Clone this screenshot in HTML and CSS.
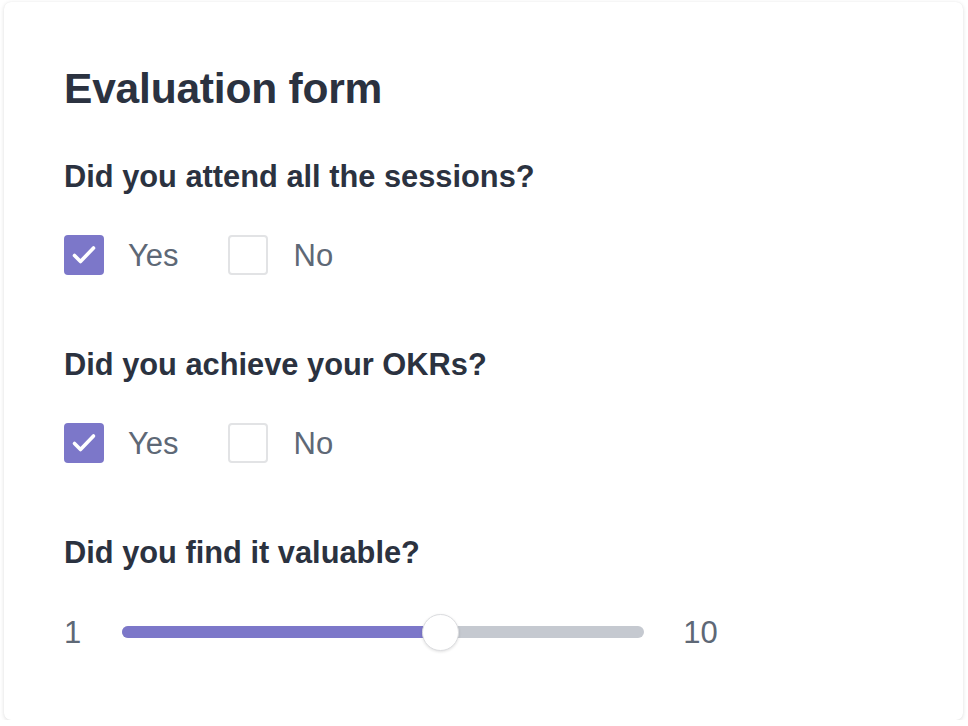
FILE: index.html
```html
<!DOCTYPE html>
<html lang="en">
<head>
<meta charset="utf-8">
<title>Evaluation form</title>
<link rel="stylesheet" href="styles.css">
</head>
<body>
<div class="card">
  <h1 class="title">Evaluation form</h1>

  <section class="field">
    <h2 class="question">Did you attend all the sessions?</h2>
    <div class="options">
      <label class="option">
        <span class="box checked"><svg viewBox="0 0 40 40" width="40" height="40"><polyline points="10.5,20.5 16.5,26.5 29.5,13" fill="none" stroke="#fff" stroke-width="3.6" stroke-linecap="round" stroke-linejoin="round"/></svg></span>
        <span class="label">Yes</span>
      </label>
      <label class="option">
        <span class="box"></span>
        <span class="label">No</span>
      </label>
    </div>
  </section>

  <section class="field">
    <h2 class="question">Did you achieve your OKRs?</h2>
    <div class="options">
      <label class="option">
        <span class="box checked"><svg viewBox="0 0 40 40" width="40" height="40"><polyline points="10.5,20.5 16.5,26.5 29.5,13" fill="none" stroke="#fff" stroke-width="3.6" stroke-linecap="round" stroke-linejoin="round"/></svg></span>
        <span class="label">Yes</span>
      </label>
      <label class="option">
        <span class="box"></span>
        <span class="label">No</span>
      </label>
    </div>
  </section>

  <section class="field">
    <h2 class="question">Did you find it valuable?</h2>
    <div class="slider-row">
      <span class="num">1</span>
      <div class="track">
        <div class="fill" style="width: 61%"></div>
        <div class="thumb" style="left: 61%"></div>
      </div>
      <span class="num">10</span>
    </div>
  </section>
</div>
</body>
</html>
```

FILE: styles.css
```css
* { box-sizing: border-box; }

html, body {
  margin: 0;
  padding: 0;
  background: #ffffff;
}

body {
  font-family: "Liberation Sans", Arial, Helvetica, sans-serif;
  color: #2b3240;
  padding: 2px 4px 0 4px;
}

.card {
  width: 959px;
  height: 718px;
  background: #ffffff;
  border-radius: 7px;
  box-shadow: 0 1px 4px rgba(0, 0, 0, 0.13), 0 0 1px rgba(0, 0, 0, 0.06);
  padding: 63px 60px 0 60px;
}

.title {
  margin: 0;
  font-size: 42.5px;
  line-height: 48px;
  font-weight: 700;
  letter-spacing: -0.2px;
  color: #2b3240;
}

.field {
  margin-top: 71px;
}

.title + .field {
  margin-top: 45px;
}

.question {
  margin: 0;
  padding-top: 1px;
  font-size: 30.8px;
  line-height: 36px;
  font-weight: 700;
  color: #2b3240;
}

.options {
  margin-top: 40px;
  display: flex;
  align-items: center;
  height: 40px;
}

.option {
  display: flex;
  align-items: center;
  margin-right: 49px;
}

.box {
  width: 40px;
  height: 40px;
  border-radius: 4px;
  border: 2px solid #e2e3e5;
  background: #fff;
  display: block;
  flex: none;
}

.box.checked {
  background: #7c77c9;
  border: none;
}

.box svg { display: block; }

.label {
  margin-left: 24px;
  padding-top: 2px;
  font-size: 31px;
  line-height: 40px;
  color: #5e6876;
}

.option + .option .label {
  margin-left: 26px;
}

.slider-row {
  margin-top: 41px;
  height: 40px;
  display: flex;
  align-items: center;
}

.num {
  padding-top: 2px;
  font-size: 31px;
  line-height: 40px;
  color: #5e6876;
}

.track {
  position: relative;
  width: 522px;
  height: 12px;
  margin: 0 39px 0 41px;
  background: #c5c9d0;
  border-radius: 6px;
}

.fill {
  height: 12px;
  background: #7c77c9;
  border-radius: 6px 0 0 6px;
}

.thumb {
  position: absolute;
  top: 50%;
  width: 37px;
  height: 37px;
  margin: -18.5px 0 0 -18.5px;
  border-radius: 50%;
  background: #fff;
  border: 1px solid #dcdde0;
  box-shadow: 0 1px 3px rgba(0, 0, 0, 0.12);
}
```
